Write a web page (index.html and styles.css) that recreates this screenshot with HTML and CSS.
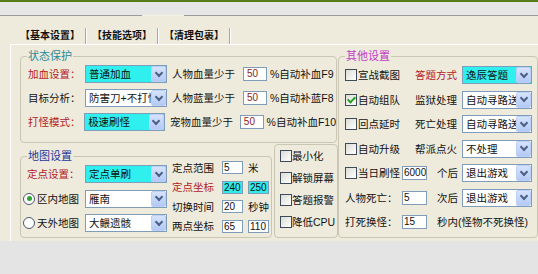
FILE: index.html
```html
<!DOCTYPE html>
<html lang="zh-CN">
<head>
    <meta charset="UTF-8">
    <meta name="viewport" content="width=device-width, initial-scale=1.0">
    <title>基本设置</title>
    <link rel="stylesheet" href="styles.css">
</head>
<body>

    <div class="titlebar"></div>
    <div class="strip">
        <div class="strip-line"></div>
        <div class="strip-gap"></div>
        <div class="strip-line grow"></div>
    </div>

    <div class="window">
        <!-- Tab headers -->
        <div class="tabs">
            <div class="tab active">【基本设置】</div>
            <div class="tab">【技能选项】</div>
            <div class="tab">【清理包裹】</div>
        </div>

        <div class="panel">
            <div class="left">
                <!-- 状态保护 -->
                <div class="group protect">
                    <div class="group-title teal">状态保护</div>
                    <div class="row">
                        <span class="lbl red">加血设置：</span>
                        <div class="combo cyan"><span class="combo-text">普通加血</span><span class="combo-btn"></span></div>
                        <span class="lbl2">人物血量少于</span>
                        <span class="num maroon">50</span>
                        <span class="tail">%自动补血F9</span>
                    </div>
                    <div class="row">
                        <span class="lbl">目标分析：</span>
                        <div class="combo"><span class="combo-text">防害刀+不打怪</span><span class="combo-btn"></span></div>
                        <span class="lbl2">人物蓝量少于</span>
                        <span class="num maroon">50</span>
                        <span class="tail">%自动补蓝F8</span>
                    </div>
                    <div class="row">
                        <span class="lbl red">打怪模式：</span>
                        <div class="combo cyan"><span class="combo-text">极速刷怪</span><span class="combo-btn"></span></div>
                        <span class="lbl2">宠物血量少于</span>
                        <span class="num maroon">50</span>
                        <span class="tail">%自动补血F10</span>
                    </div>
                </div>

                <div class="bottom">
                    <!-- 地图设置 -->
                    <div class="group map">
                        <div class="group-title blue">地图设置</div>
                        <div class="map-left">
                            <div class="row tall">
                                <span class="lbl wide red indent">定点设置：</span>
                                <div class="combo cyan"><span class="combo-text">定点单刷</span><span class="combo-btn"></span></div>
                            </div>
                            <div class="row tall">
                                <span class="opt"><span class="radio on"></span>区内地图</span>
                                <div class="combo"><span class="combo-text">雁南</span><span class="combo-btn"></span></div>
                            </div>
                            <div class="row tall">
                                <span class="opt"><span class="radio"></span>天外地图</span>
                                <div class="combo"><span class="combo-text">大鳂遗骸</span><span class="combo-btn"></span></div>
                            </div>
                        </div>
                        <div class="map-right">
                            <div class="row short">
                                <span class="lbl3">定点范围</span>
                                <span class="num small">5</span>
                                <span class="after">米</span>
                            </div>
                            <div class="row short">
                                <span class="lbl3 red">定点坐标</span>
                                <span class="num small cyan">240</span>
                                <span class="num small cyan after">250</span>
                            </div>
                            <div class="row short">
                                <span class="lbl3">切换时间</span>
                                <span class="num small">20</span>
                                <span class="after">秒钟</span>
                            </div>
                            <div class="row short">
                                <span class="lbl3">两点坐标</span>
                                <span class="num small">65</span>
                                <span class="num small after">110</span>
                            </div>
                        </div>
                    </div>

                    <!-- 小选项 -->
                    <div class="group misc">
                        <div class="row mini"><span class="chk"></span>最小化</div>
                        <div class="row mini"><span class="chk"></span>解锁屏幕</div>
                        <div class="row mini"><span class="chk"></span>答题报警</div>
                        <div class="row mini"><span class="chk"></span>降低CPU</div>
                    </div>
                </div>
            </div>

            <!-- 其他设置 -->
            <div class="group other">
                <div class="group-title purple">其他设置</div>
                <div class="row step">
                    <span class="chk-item"><span class="chk"></span>宣战截图</span>
                    <span class="lbl4 red">答题方式</span>
                    <div class="combo cyan short-combo"><span class="combo-text">逸辰答题</span><span class="combo-btn"></span></div>
                </div>
                <div class="row step">
                    <span class="chk-item"><span class="chk on"></span>自动组队</span>
                    <span class="lbl4">监狱处理</span>
                    <div class="combo short-combo"><span class="combo-text">自动寻路送回</span><span class="combo-btn"></span></div>
                </div>
                <div class="row step">
                    <span class="chk-item"><span class="chk"></span>回点延时</span>
                    <span class="lbl4">死亡处理</span>
                    <div class="combo short-combo"><span class="combo-text">自动寻路送回</span><span class="combo-btn"></span></div>
                </div>
                <div class="row step">
                    <span class="chk-item"><span class="chk"></span>自动升级</span>
                    <span class="lbl4">帮派点火</span>
                    <div class="combo short-combo"><span class="combo-text">不处理</span><span class="combo-btn"></span></div>
                </div>
                <div class="row step">
                    <span class="chk-item narrow"><span class="chk"></span>当日刷怪</span>
                    <span class="num mid">6000</span>
                    <span class="mid-text">个后</span>
                    <div class="combo short-combo"><span class="combo-text">退出游戏</span><span class="combo-btn"></span></div>
                </div>
                <div class="row step">
                    <span class="chk-item narrow">人物死亡：</span>
                    <span class="num mid">5</span>
                    <span class="mid-text">次后</span>
                    <div class="combo short-combo"><span class="combo-text">退出游戏</span><span class="combo-btn"></span></div>
                </div>
                <div class="row step">
                    <span class="chk-item narrow">打死换怪：</span>
                    <span class="num mid">15</span>
                    <span class="mid-text free">秒内(怪物不死换怪)</span>
                </div>
            </div>
        </div>
    </div>

</body>
</html>
```

FILE: styles.css
```css
* {
    box-sizing: border-box;
}
body {
    margin: 0;
    width: 538px;
    overflow: hidden;
    background-color: #e4e4e4;
    font-family: "Liberation Sans", "Noto Sans CJK SC", sans-serif;
    font-size: 10.5px;
    line-height: 14px;
    color: #111;
}
.titlebar {
    height: 2px;
    background-color: #587c1a;
}
.strip {
    display: flex;
    background-color: #e6e6e6;
}
.strip-line {
    width: 142px;
    height: 14px;
    border-bottom: 1px solid #9c9c9c;
}
.strip-gap {
    width: 42px;
    height: 14px;
    border-bottom: 1px solid #f3f0e2;
}
.strip-line.grow {
    flex: 1;
}
.window {
    height: 225px;
    background-color: #eeebdd;
}
.tabs {
    display: flex;
    height: 28px;
    padding: 12px 0 0 15px;
}
.tab {
    height: 16px;
    padding: 0 5px;
    margin-right: 1px;
    font-size: 10px;
    font-weight: bold;
    line-height: 15px;
    border-right: 1px solid #a8a8a0;
    box-shadow: 1px 0 0 #fff;
}
.panel {
    display: flex;
    align-items: flex-start;
    height: 197px;
    margin-left: 10px;
    padding: 11px 0 0 9px;
    border-top: 1px solid #fff;
    border-left: 1px solid #fff;
}
.left {
    width: 318px;
}
.group {
    position: relative;
    border: 1px solid #c9c6b4;
    border-radius: 4px;
}
.group-title {
    position: absolute;
    top: -7px;
    left: 6px;
    padding: 0 1px;
    font-size: 11px;
    line-height: 12px;
    background-color: #eeebdd;
}
.teal { color: #2b8a99; }
.blue { color: #26349a; }
.purple { color: #c23ac6; }
.red { color: #b3201f; }

.row {
    display: flex;
    align-items: center;
    height: 24px;
    white-space: nowrap;
}
.protect {
    width: 317px;
    height: 87px;
    padding: 5px 0 0 7px;
}
.lbl {
    width: 57px;
}
.lbl2 {
    width: 71px;
    margin-left: 5px;
}
.tail {
    margin-left: 3px;
}

/* combo boxes */
.combo {
    display: flex;
    align-items: center;
    width: 82px;
    height: 18px;
    padding-left: 3px;
    border: 1px solid #7f9db9;
    background-color: #fff;
}
.combo.cyan {
    background-color: #2ff0ee;
}
.combo-text {
    flex: 1;
    overflow: hidden;
    line-height: 16px;
}
.combo-btn {
    display: flex;
    align-items: center;
    justify-content: center;
    width: 15px;
    height: 16px;
    border: 1px solid #bcd0f7;
    border-radius: 2px;
    background: linear-gradient(#d6e3fd, #b3c9f6);
}
.combo-btn::after {
    content: "";
    width: 4px;
    height: 4px;
    margin-top: -3px;
    border-right: 2px solid #4d6185;
    border-bottom: 2px solid #4d6185;
    transform: rotate(45deg);
}
.short-combo {
    width: 70px;
}

/* number fields */
.num {
    width: 24px;
    height: 14px;
    padding-left: 3px;
    border: 1px solid #7f9db9;
    background-color: #fff;
    font-size: 10px;
    line-height: 12px;
    overflow: hidden;
}
.num.maroon {
    color: #8c1c1c;
}
.num.small {
    width: 21px;
    height: 13px;
    padding-left: 1px;
    line-height: 11px;
}
.num.cyan {
    background-color: #33eaea;
}
.num.mid {
    width: 25px;
    padding-left: 1px;
}

.bottom {
    display: flex;
    height: 95px;
}
.map {
    display: flex;
    width: 252px;
    margin-top: 13px;
    margin-right: 2px;
}
.map-left {
    width: 151px;
    padding: 5px 0 0 2px;
}
.row.tall {
    height: 24.5px;
}
.lbl.wide {
    width: 62px;
}
.indent {
    padding-left: 4px;
}
.opt {
    display: flex;
    align-items: center;
    width: 62px;
}
.radio {
    display: flex;
    align-items: center;
    justify-content: center;
    width: 12px;
    height: 12px;
    margin-right: 2px;
    border: 1px solid #4a5868;
    border-radius: 50%;
    background-color: #fff;
}
.radio.on::after {
    content: "";
    width: 5px;
    height: 5px;
    border-radius: 50%;
    background-color: #2fa52f;
}
.map-right {
    padding-top: 1px;
}
.row.short {
    height: 19.5px;
}
.lbl3 {
    width: 50px;
}
.after {
    margin-left: 5px;
}

.misc {
    width: 64px;
    margin-top: 1px;
    padding-left: 5px;
}
.row.mini {
    height: 22px;
}
.chk {
    flex: none;
    display: flex;
    align-items: center;
    justify-content: center;
    width: 12px;
    height: 12px;
    border: 1px solid #3d4a5a;
    background: linear-gradient(135deg, #dcdcd5, #fff);
}
.chk.on::after {
    content: "";
    width: 3px;
    height: 6px;
    margin-top: -2px;
    border-right: 2px solid #22a022;
    border-bottom: 2px solid #22a022;
    transform: rotate(45deg);
}

.other {
    width: 200px;
    height: 182px;
    padding: 6px 0 0 6px;
}
.row.step {
    height: 24.5px;
}
.chk-item {
    display: flex;
    align-items: center;
    gap: 1px;
    width: 70px;
}
.chk-item.narrow {
    width: 57px;
}
.lbl4 {
    width: 47px;
}
.mid-text {
    width: 25px;
    margin-left: 10px;
}
.mid-text.free {
    width: auto;
}
```
